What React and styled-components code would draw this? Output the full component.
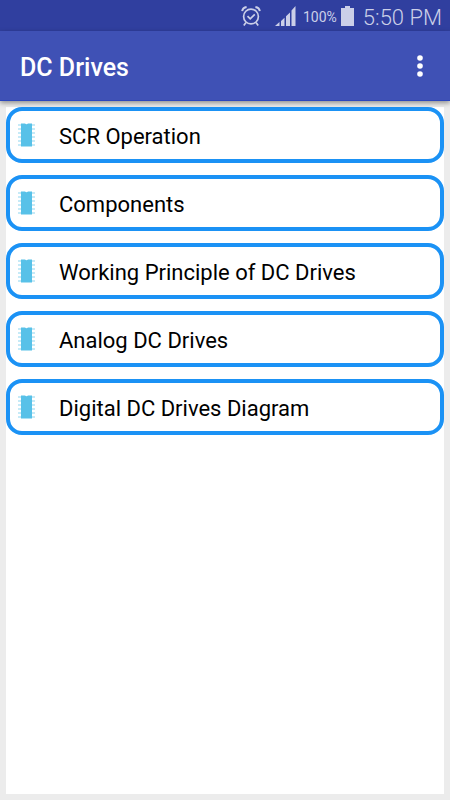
import React from "react";
import styled, { createGlobalStyle } from "styled-components";

const GlobalStyle = createGlobalStyle`
  * {
    box-sizing: border-box;
  }

  body {
    margin: 0;
    background-color: #ececec;
    font-family: Roboto, "Liberation Sans", sans-serif;
  }
`;

const PageBox = styled.div`
  display: flex;
  flex-direction: column;
  min-height: 100vh;
`;

const StatusBar = styled.div`
  display: flex;
  align-items: center;
  justify-content: flex-end;
  height: 31px;
  padding: 0 8px 0 0;
  background-color: #303f9f;
  color: #cbcfe8;
`;

const AlarmIcon = styled.svg`
  width: 20px;
  height: 22px;
  margin-right: 14px;
`;

const SignalIcon = styled.svg`
  width: 21px;
  height: 20px;
  margin-right: 7px;
`;

const BatteryText = styled.span`
  padding-top: 2px;
  font-size: 14px;
  line-height: 20px;
  margin-right: 4px;
`;

const BatteryIcon = styled.svg`
  width: 13px;
  height: 20px;
  margin-right: 9px;
`;

const ClockText = styled.span`
  padding-top: 4px;
  font-size: 22px;
  font-weight: 300;
  line-height: 26px;
`;

const AppBar = styled.header`
  display: flex;
  align-items: center;
  justify-content: space-between;
  height: 70px;
  padding: 0 10px 0 20px;
  background-color: #3f51b5;
  border-bottom: 1px solid #2b46bd;
  box-shadow: 0 2px 5px rgba(0, 0, 0, 0.4);
  z-index: 1;
`;

const Title = styled.h1`
  margin: 0;
  padding-top: 4px;
  color: #ffffff;
  font-size: 25px;
  font-weight: 500;
  line-height: 32px;
`;

const MenuButton = styled.button`
  display: flex;
  align-items: center;
  justify-content: center;
  width: 40px;
  height: 40px;
  padding: 0;
  border: 0;
  background: none;
  cursor: pointer;
`;

const MenuIcon = styled.svg`
  width: 6px;
  height: 22px;
`;

const TopicPanel = styled.main`
  flex: 1;
  margin: 6px;
  background-color: #ffffff;
`;

const TopicList = styled.ul`
  display: flex;
  flex-direction: column;
  gap: 12px;
  margin: 0;
  padding: 0;
  list-style: none;
`;

const TopicButton = styled.button`
  display: flex;
  align-items: center;
  gap: 24px;
  width: 100%;
  height: 56px;
  padding: 0 8px;
  border: 4px solid #1b92f5;
  border-radius: 16px;
  background-color: #ffffff;
  color: #000000;
  font-family: inherit;
  font-size: 22px;
  line-height: 28px;
  text-align: left;
  cursor: pointer;
`;

const TopicName = styled.span`
  padding-top: 4px;
`;

const ChipIcon = styled.svg`
  flex: none;
  width: 17px;
  height: 24px;
`;

const pinRows = [2, 6, 10, 14, 18, 22];

function TopicItem({ name }) {
  return (
    <li>
      <TopicButton type="button">
        <ChipIcon viewBox="0 0 17 24" aria-hidden="true">
          <path
            d={pinRows.map((y) => `M0 ${y}h3M14 ${y}h3`).join("")}
            stroke="#8dd5ef"
            strokeWidth="1.2"
          />
          <path d="M3 0.5h4q1.5 1.5 3 0h4v23h-11z" fill="#58c1e8" />
        </ChipIcon>
        <TopicName>{name}</TopicName>
      </TopicButton>
    </li>
  );
}

export default function App() {
  const topicsData = [
    { id: "0", name: "SCR Operation" },
    { id: "1", name: "Components" },
    { id: "2", name: "Working Principle of DC Drives" },
    { id: "3", name: "Analog DC Drives" },
    { id: "4", name: "Digital DC Drives Diagram" },
  ];

  return (
    <PageBox>
      <GlobalStyle />
      <StatusBar>
        <AlarmIcon viewBox="0 0 20 22" fill="none" stroke="currentColor" aria-hidden="true">
          <circle cx="10" cy="11.5" r="7.4" strokeWidth="1.7" />
          <path d="M6.5 11.2l2.7 2.7 4.6-4.6" strokeWidth="1.7" />
          <path d="M1.2 6.2Q1.8 2.6 5.6 2M18.8 6.2Q18.2 2.6 14.4 2" strokeWidth="2" />
          <path d="M5 17.5l-2.2 3M15 17.5l2.2 3" strokeWidth="1.7" />
        </AlarmIcon>
        <SignalIcon viewBox="0 0 21 20" fill="currentColor" aria-hidden="true">
          <path d="M0 20L4.5 16V20zM6 15l3.5-3.3V20H6zM11 10.3l4-3.8V20h-4zM16.5 4.5L20.5 0V20h-4z" />
        </SignalIcon>
        <BatteryText>100%</BatteryText>
        <BatteryIcon viewBox="0 0 13 20" fill="currentColor" aria-hidden="true">
          <path d="M4 0h5v2h4v18H0V2h4z" />
        </BatteryIcon>
        <ClockText>5:50 PM</ClockText>
      </StatusBar>
      <AppBar>
        <Title>DC Drives</Title>
        <MenuButton type="button" aria-label="More options">
          <MenuIcon viewBox="0 0 6 22" fill="#ffffff" aria-hidden="true">
            <circle cx="3" cy="3" r="2.8" />
            <circle cx="3" cy="11" r="2.8" />
            <circle cx="3" cy="19" r="2.8" />
          </MenuIcon>
        </MenuButton>
      </AppBar>
      <TopicPanel>
        <TopicList>
          {topicsData.map((topic) => {
            return <TopicItem key={topic.id} name={topic.name} />;
          })}
        </TopicList>
      </TopicPanel>
    </PageBox>
  );
}
